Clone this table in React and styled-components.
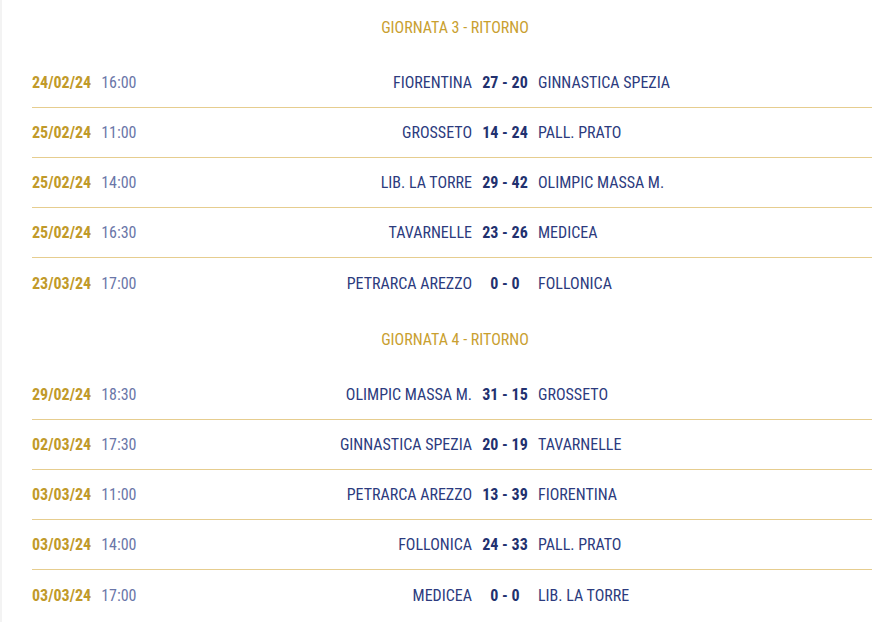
import styled, { createGlobalStyle } from 'styled-components'

const GlobalStyle = createGlobalStyle`
    *, *::before, *::after {
        box-sizing: border-box;
    }
    html, body {
        margin: 0;
        padding: 0;
        background: #fff;
        overflow: hidden;
    }
    body {
        font-family: 'Roboto Condensed', 'Liberation Sans Narrow', 'DejaVu Sans Condensed', Roboto, sans-serif;
    }
`

const rounds = [
    {
        title: 'GIORNATA 3 - RITORNO',
        matches: [
            { date: '24/02/24', time: '16:00', home: 'FIORENTINA', score: '27 - 20', away: 'GINNASTICA SPEZIA' },
            { date: '25/02/24', time: '11:00', home: 'GROSSETO', score: '14 - 24', away: 'PALL. PRATO' },
            { date: '25/02/24', time: '14:00', home: 'LIB. LA TORRE', score: '29 - 42', away: 'OLIMPIC MASSA M.' },
            { date: '25/02/24', time: '16:30', home: 'TAVARNELLE', score: '23 - 26', away: 'MEDICEA' },
            { date: '23/03/24', time: '17:00', home: 'PETRARCA AREZZO', score: '0 - 0', away: 'FOLLONICA' },
        ],
    },
    {
        title: 'GIORNATA 4 - RITORNO',
        matches: [
            { date: '29/02/24', time: '18:30', home: 'OLIMPIC MASSA M.', score: '31 - 15', away: 'GROSSETO' },
            { date: '02/03/24', time: '17:30', home: 'GINNASTICA SPEZIA', score: '20 - 19', away: 'TAVARNELLE' },
            { date: '03/03/24', time: '11:00', home: 'PETRARCA AREZZO', score: '13 - 39', away: 'FIORENTINA' },
            { date: '03/03/24', time: '14:00', home: 'FOLLONICA', score: '24 - 33', away: 'PALL. PRATO' },
            { date: '03/03/24', time: '17:00', home: 'MEDICEA', score: '0 - 0', away: 'LIB. LA TORRE' },
        ],
    },
]

export default function App() {
    return (
        <>
            <GlobalStyle />
            <Page>
                <Calendar>
                    {rounds.map((round) => (
                        <Round key={round.title}>
                            <RoundTitle>{round.title}</RoundTitle>
                            {round.matches.map((m, i) => (
                                <MatchRow key={i}>
                                    <When>
                                        <DateText>{m.date}</DateText>
                                        <TimeText>{m.time}</TimeText>
                                    </When>
                                    <Team $home>{m.home}</Team>
                                    <Score>{m.score}</Score>
                                    <Team>{m.away}</Team>
                                </MatchRow>
                            ))}
                        </Round>
                    ))}
                </Calendar>
            </Page>
        </>
    )
}

const Page = styled.div`
    display: flex;
    height: 622px;
    border-left: 2px solid #f3f3f3;
`

const Calendar = styled.div`
    margin: -4px 0 0 30px;
    width: 846px;
    flex-shrink: 0;
`

const Round = styled.section`
    display: flex;
    flex-direction: column;
`

const RoundTitle = styled.h3`
    margin: 0;
    height: 62px;
    display: flex;
    align-items: center;
    justify-content: center;
    color: #c9a030;
    font-size: 16px;
    font-weight: 400;
`

const MatchRow = styled.div`
    display: grid;
    grid-template-columns: 150px 290px 66px 1fr;
    align-items: center;
    height: 50px;
    font-size: 16px;
    border-bottom: 1px solid #e6cd8f;

    &:last-child {
        border-bottom: none;
    }
`

const When = styled.div`
    display: flex;
    align-items: center;
    gap: 10px;
`

const DateText = styled.span`
    color: #c19a2a;
    font-weight: 700;
`

const TimeText = styled.span`
    color: #6a76a8;
`

const Team = styled.span`
    color: #2c3b7e;
    text-align: ${(p) => (p.$home ? 'right' : 'left')};
    white-space: nowrap;
`

const Score = styled.span`
    color: #22316f;
    font-weight: 700;
    text-align: center;
`
